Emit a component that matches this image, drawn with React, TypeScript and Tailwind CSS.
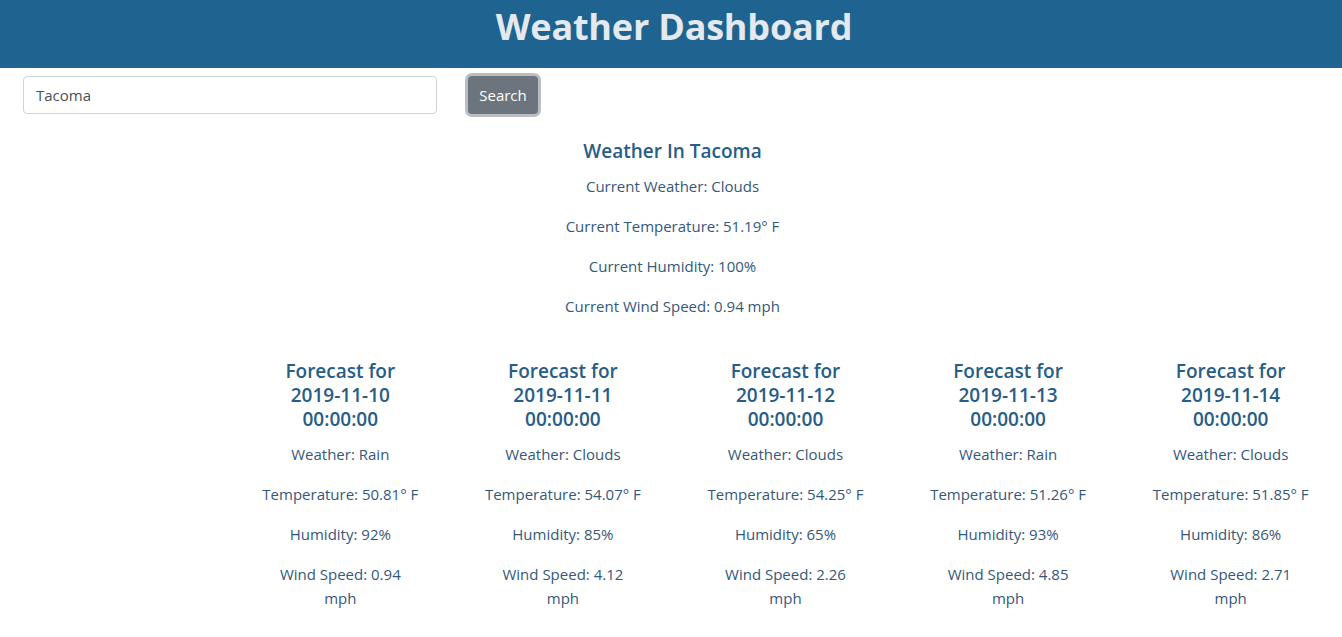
import React from "react";

const forecasts = [
  { date: "2019-11-10", weather: "Rain", temp: "50.81", hum: "92", wind: "0.94" },
  { date: "2019-11-11", weather: "Clouds", temp: "54.07", hum: "85", wind: "4.12" },
  { date: "2019-11-12", weather: "Clouds", temp: "54.25", hum: "65", wind: "2.26" },
  { date: "2019-11-13", weather: "Rain", temp: "51.26", hum: "93", wind: "4.85" },
  { date: "2019-11-14", weather: "Clouds", temp: "51.85", hum: "86", wind: "2.71" },
];

export default function App() {
  return (
    <div
      className="min-h-screen bg-white text-[#35587a]"
      style={{ fontFamily: '"Open Sans", "Noto Sans", sans-serif' }}
    >
      <header className="h-[68px] bg-[#1f6390] flex justify-center pt-[3px]">
        <h1 className="text-[36px] font-bold text-[#e3e9ef] leading-[48px] tracking-[-0.2px] pl-[6px]">
          Weather Dashboard
        </h1>
      </header>

      <div className="flex items-center pl-[23px] pt-[8px]">
        <input
          className="w-[414px] h-[38px] border border-[#ced4da] rounded-[4px] px-[12px] text-[15px] text-[#495057] outline-none"
          defaultValue="Tacoma"
        />
        <button className="ml-[31px] w-[70px] h-[38px] rounded-[4px] bg-[#6c757d] text-white text-[15px] ring-[3px] ring-[#b9bec3]">
          Search
        </button>
      </div>

      <section className="text-center mt-[25px] pl-[3px]">
        <h5 className="text-[19px] font-semibold leading-[24px] text-[#275d86]">
          Weather In Tacoma
        </h5>
        <div className="mt-[11px] flex flex-col gap-[16px] text-[15px] leading-[24px]">
          <p>Current Weather: Clouds</p>
          <p>Current Temperature: 51.19° F</p>
          <p>Current Humidity: 100%</p>
          <p>Current Wind Speed: 0.94 mph</p>
        </div>
      </section>

      <section className="flex pl-[229px] mt-[41px]">
        {forecasts.map((f) => (
          <div key={f.date} className="w-[223px] text-center">
            <h5 className="text-[19px] font-semibold leading-[24px] text-[#275d86]">
              Forecast for
              <br />
              {f.date}
              <br />
              00:00:00
            </h5>
            <div className="mt-[11px] flex flex-col gap-[16px] text-[15px] leading-[24px] whitespace-nowrap">
              <p>Weather: {f.weather}</p>
              <p>Temperature: {f.temp}° F</p>
              <p>Humidity: {f.hum}%</p>
              <p>
                Wind Speed: {f.wind}
                <br />
                mph
              </p>
            </div>
          </div>
        ))}
      </section>
    </div>
  );
}
